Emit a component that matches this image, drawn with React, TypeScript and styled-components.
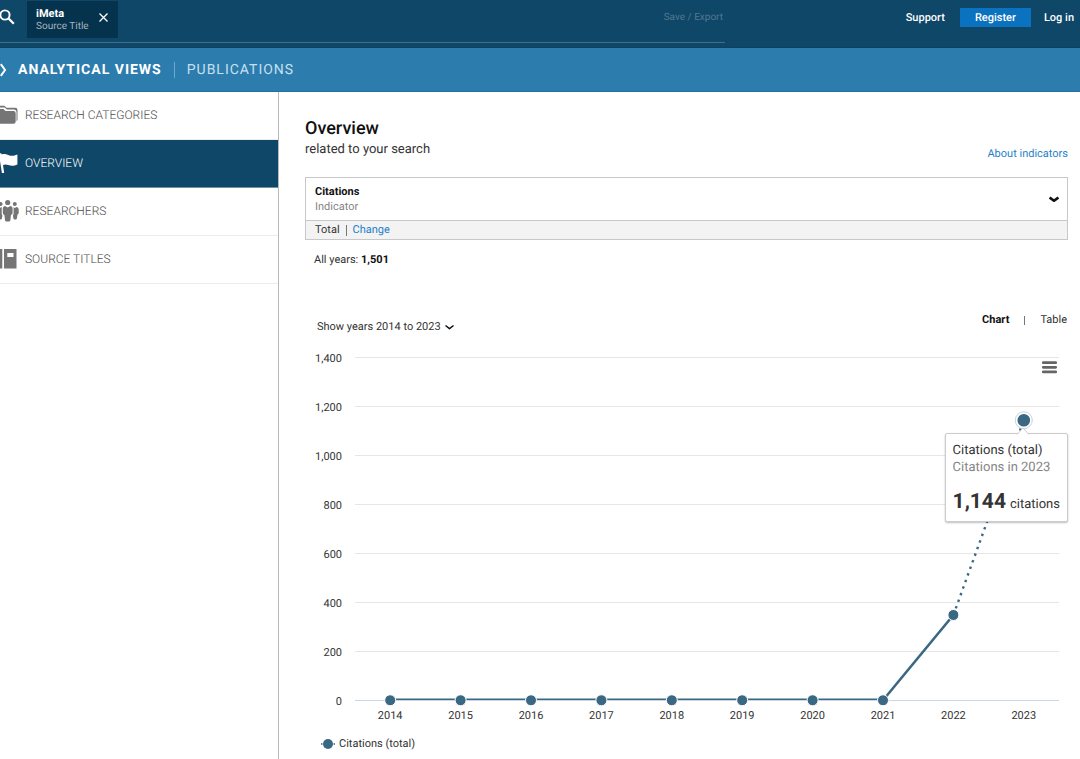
import React, { useLayoutEffect, useRef, useState } from "react";
import styled, { createGlobalStyle, css } from "styled-components";

const color = {
  navy: "#0f4768",
  navyDark: "#05324c",
  blue: "#2c7cae",
  link: "#1f82c8",
  text: "#333333",
  grey: "#757575",
  border: "#c8c8c8",
  series: "#3a6883",
};

const GlobalStyle = createGlobalStyle`
  *, *::before, *::after { box-sizing: border-box; }
  html, body, #root { margin: 0; min-height: 100%; }
  body {
    background: #ffffff;
    color: ${color.text};
    font-family: Roboto, "Liberation Sans", sans-serif;
    font-size: 11px;
    line-height: 20px;
    text-rendering: geometricPrecision;
  }
  h1, p { margin: 0; }
  a { color: inherit; text-decoration: none; }
  button { margin: 0; padding: 0; border: 0; background: none; color: inherit; font: inherit; text-rendering: inherit; cursor: pointer; }
  svg { display: block; flex: none; }
`;

const Page = styled.div`
  display: flex;
  flex-direction: column;
  min-height: 100vh;
`;

const TopBar = styled.header`
  display: flex;
  align-items: flex-start;
  height: 48px;
  background: ${color.navy};
  border-bottom: 1px solid #0f4060;
  color: #ffffff;
`;

const SearchArea = styled.div`
  display: flex;
  flex: 1;
  align-items: flex-start;
  height: 43px;
  padding: 1px 2px 0 0;
  border-bottom: 1px solid #41708c;
`;

const SearchButton = styled.button`
  height: 32px;
  width: 27px;
`;

const Chip = styled.div`
  display: flex;
  justify-content: space-between;
  width: 91px;
  height: 37px;
  padding: 6px 9px 0 9px;
  background: ${color.navyDark};
  line-height: 13px;
`;

const ChipText = styled.div`
  display: flex;
  flex-direction: column;
`;

const ChipTitle = styled.span`
  font-weight: 700;
`;

const ChipKind = styled.span`
  color: #a5b4be;
  font-size: 10px;
`;

const CloseButton = styled.button`
  height: 20px;
`;

const SaveButton = styled.button`
  margin: 7px 0 0 auto;
  color: #53788e;
  font-size: 10px;
`;

const Account = styled.nav`
  display: flex;
  align-items: flex-start;
  justify-content: flex-end;
  width: 355px;
  padding: 8px 6px 0 0;
`;

const AccountLink = styled.a`
  font-weight: 500;
`;

const RegisterLink = styled.a`
  width: 71px;
  margin: 0 13px 0 15px;
  background: #0b72bf;
  font-weight: 500;
  line-height: 19px;
  text-align: center;
`;

const ViewBar = styled.nav`
  display: flex;
  align-items: center;
  height: 44px;
  padding-top: 1px;
  background: ${color.blue};
  border-bottom: 1px solid #26709f;
  color: #ffffff;
  font-size: 14px;
  letter-spacing: 1px;
`;

const ViewLink = styled.a<{ $active?: boolean }>`
  font-weight: ${(p) => (p.$active ? 700 : 400)};
  color: ${(p) => (p.$active ? "#ffffff" : "#c7e0f0")};
`;

const ViewDivider = styled.span`
  width: 1px;
  height: 16px;
  margin: 0 12px;
  background: #6ba9ce;
`;

const ChevronBox = styled.span`
  width: 18px;
`;

const Body = styled.div`
  display: flex;
  flex: 1;
`;

const Sidebar = styled.nav`
  width: 279px;
  border-right: 1px solid #b9b9b9;
`;

const SideLink = styled.a<{ $active?: boolean }>`
  display: flex;
  align-items: center;
  gap: 5px;
  height: 48px;
  padding-bottom: 1px;
  border-bottom: 1px solid #ececec;
  color: #4a4a4a;
  font-size: 12px;
  font-weight: 300;
  svg { color: ${color.grey}; }
  ${(p) =>
    p.$active &&
    css`
      background: ${color.navy};
      border-color: #6f91a5;
      color: #ffffff;
      svg { color: #ffffff; }
    `}
`;

const Main = styled.main`
  flex: 1;
  min-width: 0;
  padding: 26px 12px 4px 26px;
`;

const Heading = styled.div`
  display: flex;
  align-items: flex-end;
  justify-content: space-between;
  margin-bottom: 13px;
`;

const Title = styled.h1`
  color: #111111;
  font-size: 18px;
  font-weight: 500;
  line-height: 22px;
`;

const Subtitle = styled.p`
  font-size: 13px;
  line-height: 20px;
  padding-bottom: 4px;
`;

const BlueLink = styled.a`
  color: ${color.link};
`;

const IndicatorBox = styled.section`
  border: 1px solid ${color.border};
`;

const IndicatorButton = styled.button`
  display: flex;
  align-items: center;
  justify-content: space-between;
  width: 100%;
  height: 42px;
  padding: 0 8px 0 9px;
  text-align: left;
  line-height: 15px;
`;

const IndicatorName = styled.span`
  display: block;
  color: #111111;
  font-weight: 700;
`;

const IndicatorKind = styled.span`
  display: block;
  color: #858585;
`;

const IndicatorFooter = styled.div`
  display: flex;
  align-items: center;
  height: 19px;
  padding: 0 9px;
  border-top: 1px solid ${color.border};
  background: #f3f3f3;
`;

const Bar = styled.span`
  width: 1px;
  height: 11px;
  margin: 0 6px;
  background: #777777;
`;

const Summary = styled.p`
  padding: 10px 9px 40px;
  strong { color: #111111; font-weight: 700; }
`;

const Controls = styled.div`
  display: flex;
  align-items: flex-start;
  justify-content: space-between;
  height: 30px;
  padding: 0 1px 0 12px;
`;

const YearsButton = styled.button`
  display: flex;
  align-items: center;
  gap: 4px;
  padding-top: 7px;
`;

const Toggle = styled.div`
  display: flex;
  align-items: center;
`;

const ToggleButton = styled.button<{ $active?: boolean }>`
  font-weight: ${(p) => (p.$active ? 700 : 400)};
  color: ${(p) => (p.$active ? "#111111" : color.text)};
`;

const ToggleBar = styled(Bar)`
  height: 9px;
  margin: 0 15px;
`;

const ChartFrame = styled.div`
  position: relative;
  height: 394px;
`;

const AxisText = styled.text`
  fill: ${color.text};
  font-size: 11px;
`;

const MenuButton = styled.button`
  position: absolute;
  top: 20px;
  right: 10px;
`;

const Tooltip = styled.div`
  position: absolute;
  top: 93px;
  right: 0;
  padding: 8px 7px 4px;
  border: 1px solid #cccccc;
  border-radius: 2px;
  background: #ffffff;
  box-shadow: 0 1px 2px rgba(0, 0, 0, 0.25);
  font-size: 13px;
  line-height: 17px;
  white-space: nowrap;
`;

const TooltipArrow = styled.svg`
  position: absolute;
  top: -7px;
  right: 37px;
`;

const TooltipMuted = styled.p`
  color: #858585;
`;

const TooltipValue = styled.p`
  display: flex;
  align-items: baseline;
  gap: 4px;
  padding-top: 14px;
  line-height: 24px;
  strong { font-size: 21px; font-weight: 700; }
`;

const Legend = styled.div`
  display: flex;
  align-items: center;
  gap: 4px;
  padding-left: 16px;
`;

const series = [
  { year: 2014, value: 1 },
  { year: 2015, value: 1 },
  { year: 2016, value: 1 },
  { year: 2017, value: 1 },
  { year: 2018, value: 1 },
  { year: 2019, value: 1 },
  { year: 2020, value: 1 },
  { year: 2021, value: 1 },
  { year: 2022, value: 349 },
  { year: 2023, value: 1144 },
];
const ticks = [1400, 1200, 1000, 800, 600, 400, 200, 0];

function Chevron({ width = 9, stroke = 2 }: { width?: number; stroke?: number }) {
  return (
    <svg width={width} height="7" viewBox="0 0 9 7" fill="none" stroke="#111" strokeWidth={stroke} preserveAspectRatio="none" aria-hidden>
      <path d="M.5 1.500 4.500 4.700 8.500 1.500" strokeLinejoin="round" />
    </svg>
  );
}

function CitationsChart() {
  const frame = useRef<HTMLDivElement>(null);
  const [width, setWidth] = useState(763);

  useLayoutEffect(() => {
    const el = frame.current;
    if (!el) return;
    const update = () => setWidth(el.clientWidth);
    update();
    const observer = new ResizeObserver(update);
    observer.observe(el);
    return () => observer.disconnect();
  }, []);

  const left = 50;
  const right = width - 9;
  const base = 360.5;
  const step = (right - left) / series.length;
  const points = series.map((d, i) => ({
    ...d,
    x: left + step * (i + 0.5),
    y: base - (d.value * 49) / 200,
  }));
  const solid = points.slice(0, -1);
  const flat = points.slice(0, -2);
  const last = points[points.length - 1];
  const previous = points[points.length - 2];
  const bend = points[points.length - 3];

  return (
    <ChartFrame ref={frame}>
      <svg width={width} height="390" role="img" aria-label="Citations per year">
        {ticks.map((t) => {
          const y = base - (t * 49) / 200;
          return (
            <g key={t}>
              <line x1={left} x2={right} y1={y} y2={y} stroke={t ? "#e6e6e6" : "#ccd6eb"} />
              <AxisText x={37} y={y + 4} textAnchor="end">{t.toLocaleString("en-US")}</AxisText>
            </g>
          );
        })}
        <polyline points={flat.map((p) => `${p.x},${p.y - 1}`).join(" ")} fill="none" stroke={color.series} strokeWidth="1.6" />
        <line x1={bend.x} y1={bend.y} x2={previous.x} y2={previous.y} stroke={color.series} strokeWidth="2.6" />
        <line x1={previous.x} y1={previous.y} x2={last.x} y2={last.y} stroke={color.series} strokeWidth="2.4" strokeDasharray="2.4 4.6" />
        {solid.map((p) => (
          <circle key={p.year} cx={p.x} cy={p.y} r="5.5" fill={color.series} stroke="#fff" />
        ))}
        <circle cx={last.x} cy={last.y} r="8.5" fill="#fff" stroke="#c5d3dc" />
        <circle cx={last.x} cy={last.y} r="6.3" fill={color.series} />
        {points.map((p) => (
          <AxisText key={p.year} x={p.x} y={379} textAnchor="middle">{p.year}</AxisText>
        ))}
      </svg>
      <MenuButton aria-label="Chart menu">
        <svg width="17" height="15" viewBox="0 0 17 15" stroke="#666" strokeWidth="2.8" strokeLinecap="round">
          <path d="M2.3 2.7h12.4M2.3 7.3h12.4M2.3 11.9h12.4" />
        </svg>
      </MenuButton>
      <Tooltip role="tooltip">
        <TooltipArrow width="14" height="8" viewBox="0 0 14 8">
          <path d="M1 7.5 7 1l6 6.500" fill="#fff" stroke="#ccc" />
        </TooltipArrow>
        <p>Citations (total)</p>
        <TooltipMuted>Citations in 2023</TooltipMuted>
        <TooltipValue><strong>1,144</strong> <span>citations</span></TooltipValue>
      </Tooltip>
    </ChartFrame>
  );
}

export default function App() {
  return (
    <Page>
      <GlobalStyle />
      <TopBar>
        <SearchArea>
          <SearchButton aria-label="Search">
            <svg width="16" height="16" viewBox="0 0 16 16" fill="none" stroke="#fff" strokeWidth="1.9">
              <circle cx="5" cy="6" r="4.600" />
              <path d="M8.300 9.300l5.500 5.400" strokeWidth="2.300" />
            </svg>
          </SearchButton>
          <Chip>
            <ChipText>
              <ChipTitle>iMeta</ChipTitle>
              <ChipKind>Source Title</ChipKind>
            </ChipText>
            <CloseButton aria-label="Remove iMeta">
              <svg width="11" height="11" viewBox="0 0 11 11" stroke="#fff" strokeWidth="1.300">
                <path d="M1.500 1.500l8 8M9.500 1.500l-8 8" />
              </svg>
            </CloseButton>
          </Chip>
          <SaveButton>Save / Export</SaveButton>
        </SearchArea>
        <Account>
          <AccountLink href="#support">Support</AccountLink>
          <RegisterLink href="#register">Register</RegisterLink>
          <AccountLink href="#login">Log in</AccountLink>
        </Account>
      </TopBar>
      <ViewBar>
        <ChevronBox>
          <svg width="7" height="14" viewBox="0 0 7 14" fill="none" stroke="#fff" strokeWidth="2">
            <path d="M.8 1.200 5 7 .8 12.800" />
          </svg>
        </ChevronBox>
        <ViewLink href="#views" $active>ANALYTICAL VIEWS</ViewLink>
        <ViewDivider />
        <ViewLink href="#publications">PUBLICATIONS</ViewLink>
      </ViewBar>
      <Body>
        <Sidebar>
          <SideLink href="#categories">
            <svg width="20" height="20" viewBox="0 0 20 20" fill="currentColor">
              <path d="M-4 .7h8.500l2 2h8.700q2.300 0 2.300 2.300v9.500q0 1.200-1 1.700V7.500q0-3-2.800-3H6.800l-2-2H-4z" />
              <path d="M-4 4h7.500l2 2h8q2.200 0 2.200 2.200v8.300q0 2.200-2.200 2.200H-4z" />
            </svg>
            RESEARCH CATEGORIES
          </SideLink>
          <SideLink href="#overview" $active>
            <svg width="20" height="22" viewBox="0 0 20 22" fill="currentColor">
              <path d="M0 1.500c.8-.5 1.800 0 1.600.9 3-1 5-.2 7.200.8 2.800 1.100 5 .7 8.600-.6V12.500c-3.600 1.600-6.200 1.500-9.200.4-2-.7-3.400-.7-5.200.1L4.200 21H1.900L0 9z" />
            </svg>
            OVERVIEW
          </SideLink>
          <SideLink href="#researchers">
            <svg width="20" height="24" viewBox="0 0 20 24" fill="currentColor">
              <circle cx="7.700" cy="3.500" r="2.600" />
              <circle cx="14.800" cy="5" r="2" />
              <circle cx="0.600" cy="5" r="2" />
              <path d="M5 7l2.700 1.500L10.400 7q2.200.3 2.200 2.500v4.500q0 1.500-1.600 2l-.7 5.500q-.2 1-1.200 1H6.300q-1 0-1.200-1L4.400 16q-1.600-.5-1.600-2V9.500Q2.800 7.300 5 7z" />
              <path d="M13.400 8l1.400.9L16.500 8q2.200.4 2.200 2.500v3.300q0 1.400-1.200 1.800l-.6 4q-.1.800-1 .8h-1.500q-.9 0-1-.8l-.5-3.200q.7-.8.700-2V9.500q0-.9-.2-1.500zM0 8.800l1.800-.8q-.1.600-.1 1.500v5q0 1.200.7 2l-.5 3.100q-.1.800-1 .8H0z" />
            </svg>
            RESEARCHERS
          </SideLink>
          <SideLink href="#sources">
            <svg width="20" height="20" viewBox="0 0 20 20" fill="currentColor">
              <path d="M0 0h2.300v19.500H0z" />
              <path fillRule="evenodd" d="M4 0h12.500v19.500H4zM7.300 4v4h6.200V4z" />
            </svg>
            SOURCE TITLES
          </SideLink>
        </Sidebar>
        <Main>
          <Heading>
            <div>
              <Title>Overview</Title>
              <Subtitle>related to your search</Subtitle>
            </div>
            <BlueLink href="#indicators">About indicators</BlueLink>
          </Heading>
          <IndicatorBox>
            <IndicatorButton aria-haspopup="listbox">
              <span>
                <IndicatorName>Citations</IndicatorName>
                <IndicatorKind>Indicator</IndicatorKind>
              </span>
              <Chevron width={10} stroke={2.4} />
            </IndicatorButton>
            <IndicatorFooter>
              <span>Total</span>
              <Bar />
              <BlueLink href="#change">Change</BlueLink>
            </IndicatorFooter>
          </IndicatorBox>
          <Summary>All years: <strong>1,501</strong></Summary>
          <Controls>
            <YearsButton aria-haspopup="listbox">
              <span>Show years 2014 to 2023</span>
              <Chevron stroke={1.5} />
            </YearsButton>
            <Toggle>
              <ToggleButton $active>Chart</ToggleButton>
              <ToggleBar />
              <ToggleButton>Table</ToggleButton>
            </Toggle>
          </Controls>
          <CitationsChart />
          <Legend>
            <svg width="14" height="12" viewBox="0 0 14 12">
              <path d="M0 6h14" stroke={color.series} strokeWidth="1.500" strokeDasharray="1.500 11" />
              <circle cx="7" cy="6" r="5" fill={color.series} />
            </svg>
            <span>Citations (total)</span>
          </Legend>
        </Main>
      </Body>
    </Page>
  );
}
